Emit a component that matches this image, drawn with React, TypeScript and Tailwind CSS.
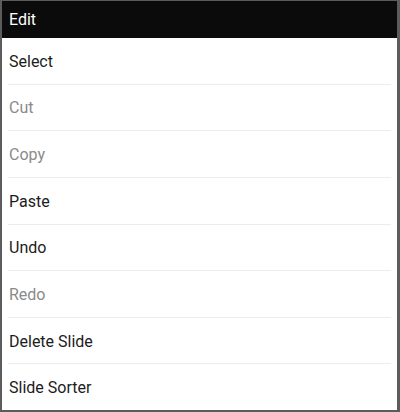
import React from 'react';

const items: { label: string; disabled?: boolean }[] = [
  { label: 'Select' },
  { label: 'Cut', disabled: true },
  { label: 'Copy', disabled: true },
  { label: 'Paste' },
  { label: 'Undo' },
  { label: 'Redo', disabled: true },
  { label: 'Delete Slide' },
  { label: 'Slide Sorter' },
];

export default function App() {
  return (
    <div
      className="flex h-[412px] w-[400px] flex-col border-b-2 border-l-2 border-r-[3px] border-t border-[#5c5c5c] bg-white"
      style={{ fontFamily: 'Roboto, "Noto Sans", sans-serif' }}
    >
      <div className="flex h-[37px] shrink-0 items-center bg-[#0b0b0b] px-[7px] pt-[1px] text-[16px] text-white">Edit</div>
      <div className="flex flex-1 flex-col">
        {items.map((item, i) => (
          <div
            key={item.label}
            className={`mx-[6px] flex flex-1 items-center px-[1px] pt-[2px] text-[16px] ${
              i < items.length - 1 ? 'border-b border-[#ececec]' : ''
            } ${item.disabled ? 'text-[#8a8a8a]' : 'text-[#1c1c1c]'}`}
          >
            {item.label}
          </div>
        ))}
      </div>
    </div>
  );
}
